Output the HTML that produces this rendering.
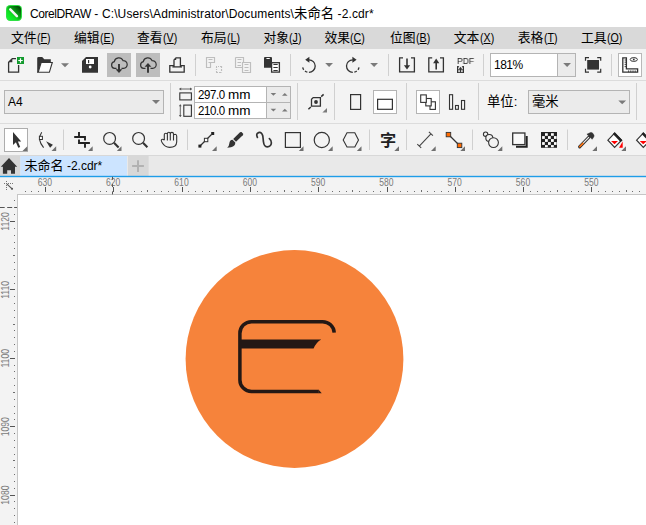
<!DOCTYPE html>
<html><head><meta charset="utf-8">
<style>
html,body{margin:0;padding:0;}
body{width:646px;height:525px;overflow:hidden;background:#fff;position:relative;font-family:"Liberation Sans","Noto Sans CJK SC",sans-serif;color:#000;}
.abs{position:absolute;}
.t{position:absolute;white-space:nowrap;line-height:1;z-index:2;}
#title{left:0;top:0;width:646px;height:27px;background:#fff;}
#menu{left:0;top:27px;width:646px;height:22px;background:#d9d9d9;}
#tb1{left:0;top:49px;width:646px;height:31px;background:#f3f3f3;}
#pb{left:0;top:80px;width:646px;height:44px;background:#f3f3f3;border-top:1px solid #dcdcdc;box-sizing:border-box;}
#tbx{left:0;top:123px;width:646px;height:33px;background:#f3f3f3;border-top:1px solid #dcdcdc;border-bottom:1px solid #d8d8d8;box-sizing:border-box;}
#tabs{left:0;top:156px;width:646px;height:20px;background:#e9e9e9;}
#blue{left:0;top:176px;width:646px;height:1px;background:#2aa0e6;}
#hr{left:0;top:177px;width:646px;height:18px;background:#f3f3f3;}
#vr{left:0;top:194px;width:18px;height:331px;background:#f3f3f3;}
#canvas{left:17px;top:194px;width:640px;height:340px;background:#fff;border:1px solid #c6c6c6;box-sizing:border-box;}
.m{top:31.3px;font-size:12.8px;}
.m i{font-style:normal;font-size:13.3px;display:inline-block;transform:scaleX(0.8);margin-left:0.4px;transform-origin:0 50%;position:relative;top:0px;}
.c{font-size:13.33px;}
.l{font-size:12px;}
.n{font-size:12.5px;letter-spacing:-0.45px;transform:scaleX(0.92);transform-origin:0 50%;}
.u2{font-size:12.5px;transform:scaleX(1.08);transform-origin:0 50%;}
.m u{text-decoration:underline;text-underline-offset:1px;}
svg{position:absolute;left:0;top:0;}
</style></head><body>
<div id="title" class="abs"></div>
<div id="menu" class="abs"></div>
<div id="tb1" class="abs"></div>
<div id="pb" class="abs"></div>
<div id="tbx" class="abs"></div>
<div id="tabs" class="abs"></div>
<div id="blue" class="abs"></div>
<div id="hr" class="abs"></div>
<div id="vr" class="abs"></div>
<div id="canvas" class="abs"></div>

<span class="t" id="ttl" style="left:30px;top:7px;font-size:12px;letter-spacing:0.125px"><span style="letter-spacing:-0.45px">CorelDRAW</span> - C:\Users\Administrator\Documents\<span class="c" style="letter-spacing:0">未命名</span> -2.cdr*</span>
<span class="t l" id="a4" style="left:8px;top:96px;">A4</span>
<span class="t l n" id="w1" style="left:198px;top:89px;">297.0</span><span class="t l u2" id="w1u" style="left:227.6px;top:89px;">mm</span>
<span class="t l n" id="w2" style="left:198px;top:105px;">210.0</span><span class="t l u2" id="w2u" style="left:227.6px;top:105px;">mm</span>
<span class="t l" id="zm" style="left:494px;top:59px;letter-spacing:-0.5px">181%</span>
<span class="t" id="pdf" style="transform:scaleX(0.95) translateZ(0);transform-origin:0 50%;will-change:transform;left:456.7px;top:57px;font-size:9px;letter-spacing:0;color:#222">PDF</span>
<span class="t c" id="unit" style="left:487px;top:94.5px;">单位:</span>
<span class="t c" id="mm" style="left:532px;top:94.5px;">毫米</span>
<span class="t" id="zi" style="left:380px;top:132.4px;font-size:16.2px;font-weight:bold;color:#222;">字</span>
<span class="t" id="tab" style="left:24.6px;top:159px;font-size:12px;"><span class="c" style="font-size:13px">未命名</span> -2.cdr*</span>

<span class="t m" style="left:11px">文件<i>(<u>F</u>)</i></span>
<span class="t m" style="left:74px">编辑<i>(<u>E</u>)</i></span>
<span class="t m" style="left:137px">查看<i>(<u>V</u>)</i></span>
<span class="t m" style="left:201px">布局<i>(<u>L</u>)</i></span>
<span class="t m" style="left:263.5px">对象<i>(<u>J</u>)</i></span>
<span class="t m" style="left:324.5px">效果<i>(<u>C</u>)</i></span>
<span class="t m" style="left:390px">位图<i>(<u>B</u>)</i></span>
<span class="t m" style="left:453.7px">文本<i>(<u>X</u>)</i></span>
<span class="t m" style="left:517.7px">表格<i>(<u>T</u>)</i></span>
<span class="t m" style="left:581px">工具<i>(<u>O</u>)</i></span>

<svg id="ui" width="646" height="525" viewBox="0 0 646 525">
<!-- app icon -->
<defs>
<linearGradient id="gapp" x1="0" y1="1" x2="1" y2="0"><stop offset="0" stop-color="#14fb30"/><stop offset="0.35" stop-color="#0fe022"/><stop offset="0.62" stop-color="#089012"/><stop offset="0.9" stop-color="#024a05"/></linearGradient>
</defs>
<rect x="6" y="5" width="16" height="16" rx="4.2" fill="#2fe044"/>
<rect x="7" y="6" width="14" height="14" rx="3.4" fill="url(#gapp)"/>
<path d="M10.3 9.3 L16.9 16.1" stroke="#f4f4f4" stroke-width="2.5" stroke-linecap="round"/>
<!-- toolbar1 -->
<g fill="none" stroke="#333" stroke-width="1.3">
<!-- new -->
<path d="M16 58.6 H12.3 L8.6 62.3 V72.2 H18.6 V65"/>
</g>
<path d="M8.6 62.3 H12.3 V58.6 Z" fill="#333"/>
<rect x="17" y="57" width="7" height="7" fill="#139a2e"/>
<path d="M20.5 58.3 V62.7 M18.3 60.5 H22.7" stroke="#fff" stroke-width="1.2"/>
<!-- open -->
<path d="M37.2 58.3 Q37.2 57 38.6 57 H42.2 L44.3 59.3 H50.8 V62.4 H41.2 L38 72.8 H37.2 Z" fill="#333"/>
<path d="M41.15 62.5 H52.3 L49.35 72.3 H38.15 Z" fill="#fbfbfb" stroke="#333" stroke-width="1.1"/>
<path d="M61 63.2 H69 L65 67.2 Z" fill="#7a7a7a"/>
<!-- save -->
<path d="M86 57 H98 V72.7 H82 V61 Z" fill="#333"/>
<rect x="86" y="59" width="8" height="5" fill="#fff"/>
<rect x="88" y="60" width="1.2" height="3.2" fill="#333"/>
<circle cx="90.2" cy="67" r="1.4" fill="#fff"/>
<!-- cloud buttons -->
<rect x="107" y="53" width="24" height="24" fill="#bdbdbd"/>
<rect x="136" y="53" width="24" height="24" fill="#bdbdbd"/>
<g fill="none" stroke="#333" stroke-width="1.2">
<path d="M116.5 68.4 H114.6 A3.4 3.4 0 0 1 114.3 61.7 A4.6 4.6 0 0 1 123 60.6 A3.9 3.9 0 0 1 123.6 68.4 H121.5"/>
<path d="M119 64 V70" stroke-width="1.9"/>
<path d="M145.5 68.4 H143.6 A3.4 3.4 0 0 1 143.3 61.7 A4.6 4.6 0 0 1 152 60.6 A3.9 3.9 0 0 1 152.6 68.4 H150.5"/>
<path d="M148 65.5 V72.7" stroke-width="1.9"/>
</g>
<path d="M115.6 69.3 H122.4 L119 73 Z" fill="#333"/>
<path d="M144.6 66.8 H151.4 L148 63 Z" fill="#333"/>
<!-- print -->
<g fill="none" stroke="#333" stroke-width="1.3">
<path d="M174 65.7 H169.8 V72.1 H184.2 V65.7 H180.4"/>
<path d="M174 66.9 V59.9 L176 57.8 H180.4 V66.9"/>
<path d="M172.4 66.9 H182"/>
</g>
<path d="M174 60 H176.2 V57.8 Z" fill="#333"/>
<!-- separators -->
<g stroke="#d0d0d0" stroke-width="1">
<path d="M195.5 54 V76 M290.5 54 V76 M388.5 54 V76 M483.5 54 V76 M611.5 54 V76"/>
</g>
<!-- cut (disabled) -->
<g fill="none" stroke="#bebebe" stroke-width="1.15">
<path d="M206.5 57.5 H214.5 V62.5 H210.5 V67.5 H206.5 Z"/>
<path d="M208.5 59.5 H212.5 M208.5 62.5 H210"/>
<path d="M216 66.5 H222" stroke-dasharray="1 1"/>
<path d="M216.5 67 V72" stroke-dasharray="1 1"/>
<path d="M216 72.5 H222 M221.5 66 V72.5" stroke-dasharray="2 1"/>
<!-- copy (disabled) -->
<path d="M235.5 57.5 H243.5 V62 M242 67.5 H235.5 V57.5"/>
<path d="M237.5 59.5 H241.5 M237.5 62.5 H241 M237.5 65.5 H241"/>
<path d="M242.5 62.5 H250.5 V72.5 H242.5 Z"/>
<path d="M244.5 64.5 H248.5 M244.5 67.5 H248.5 M244.5 70.5 H248.5"/>
</g>
<!-- paste -->
<path d="M264 58 Q264 57 265 57 H271 Q272 57 272 58 V62 H271 V67.8 H264 Z" fill="#333"/>
<rect x="266.3" y="57.9" width="3.6" height="1.2" rx="0.6" fill="#fff"/>
<rect x="271.6" y="62.7" width="7.8" height="9.4" fill="#fff" stroke="#333" stroke-width="1.3"/>
<path d="M273.4 64.5 H277.7 M273.4 67.5 H277.7 M273.4 70.5 H277.7" stroke="#333" stroke-width="1.1"/>
<!-- undo -->
<g fill="none" stroke="#333" stroke-width="1.3">
<path d="M308.9 59.8 A6.3 6.3 0 0 1 308.9 72.4"/>
<path d="M308.9 72.4 A6.3 6.3 0 0 1 302.6 66.1" stroke-dasharray="0 1.6 2.6 1.6 2.6 3"/>
<path d="M352.8 59.8 A6.3 6.3 0 0 0 352.8 72.4"/>
<path d="M352.8 72.4 A6.3 6.3 0 0 0 359.1 66.1" stroke-dasharray="0 1.6 2.6 1.6 2.6 3"/>
</g>
<path d="M305.2 59.8 L309.4 56.8 V62.8 Z" fill="#333"/>
<path d="M356.6 59.8 L352.4 56.8 V62.8 Z" fill="#333"/>
<path d="M325.2 63 H333 L329.1 67 Z" fill="#7a7a7a"/>
<path d="M370.2 63 H378 L374.1 67 Z" fill="#7a7a7a"/>
<!-- import / export -->
<g fill="none" stroke="#333" stroke-width="1.3">
<path d="M403 57.8 H399.6 V71.8 H414.4 V57.8 H411"/>
<path d="M432.2 57.8 H428.8 V71.8 H443.4 V57.8 H440"/>
</g>
<path d="M407 58.6 V67" stroke="#333" stroke-width="1.6"/>
<path d="M403.9 65.2 H410.1 L407 69.6 Z" fill="#333"/>
<path d="M436.2 69.6 V61.5" stroke="#333" stroke-width="1.6"/>
<path d="M433.1 63.2 H439.3 L436.2 58.6 Z" fill="#333"/>
<!-- pdf small icon -->
<g fill="#333">
<rect x="457" y="66.2" width="1.2" height="6.7"/><rect x="462.8" y="66.2" width="1.2" height="6.7"/>
<rect x="457" y="71.8" width="7" height="1.1"/>
<rect x="457" y="66.2" width="2.1" height="1.1"/><rect x="461.9" y="66.2" width="2.1" height="1.1"/>
<rect x="457" y="69.4" width="7" height="0.9"/>
<rect x="460" y="69" width="1" height="3.5"/>
<path d="M458.6 69.6 H462.4 L460.5 66.7 Z"/>
</g>
<!-- zoom combobox -->
<rect x="490.5" y="53.5" width="85" height="23" fill="#fff" stroke="#b4b4b4"/>
<rect x="558" y="54" width="17" height="22" fill="#ebebeb"/>
<path d="M557.5 54 V76" stroke="#b4b4b4"/>
<path d="M563.2 63 H571 L567.1 67 Z" fill="#7a7a7a"/>
<!-- fullscreen -->
<rect x="587.2" y="60" width="11.8" height="9.6" fill="#333"/>
<g fill="none" stroke="#333" stroke-width="1.2">
<path d="M585.5 60.8 V57.6 H589 M597.2 57.6 H600.7 V60.8 M600.7 68.8 V72.1 H597.2 M589 72.1 H585.5 V68.8"/>
</g>
<!-- rulers button -->
<rect x="618.5" y="53.5" width="23" height="23" fill="#fff" stroke="#b8b8b8"/>
<path d="M622.8 57.8 H626.4 V68.8 H637.6 V72.2 H622.8 Z" fill="none" stroke="#333" stroke-width="1.3"/>
<path d="M624.6 60 H626.4 M624.6 62.2 H626.4 M624.6 64.4 H626.4 M624.6 66.6 H626.4 M628.6 70.4 V72.2 M630.8 70.4 V72.2 M633 70.4 V72.2 M635.2 70.4 V72.2" stroke="#333" stroke-width="0.9"/>
<ellipse cx="633.8" cy="59.5" rx="3.6" ry="1.9" fill="none" stroke="#333" stroke-width="1"/>
<circle cx="633.8" cy="59.5" r="0.9" fill="#333"/>
<!-- property bar -->
<rect x="4.5" y="90.5" width="159" height="23" fill="#ebebeb" stroke="#b4b4b4"/>
<path d="M152 100 H160 L156 104 Z" fill="#7a7a7a"/>
<g stroke="#d0d0d0" stroke-width="1">
<path d="M170.5 83 V120 M297.5 83 V120 M334.5 83 V120 M406.5 83 V120 M478.5 83 V120 M636.5 83 V120"/>
</g>
<!-- width/height icons -->
<g fill="none" stroke="#333" stroke-width="1.1">
<rect x="179.8" y="92.9" width="11.6" height="7"/>
<rect x="183.8" y="105.1" width="7.6" height="11.2"/>
</g>
<path d="M179.5 89 H191.7 M180.3 104.8 V116.6" stroke="#555" stroke-width="0.9"/>
<path d="M179.2 89 L181.2 87.6 V90.4 Z M192 89 L190 87.6 V90.4 Z M180.3 104.3 L178.9 106.3 H181.7 Z M180.3 117 L178.9 115 H181.7 Z" fill="#555"/>
<!-- spin inputs -->
<rect x="194.5" y="86.5" width="96" height="32" fill="#fff" stroke="#b4b4b4"/>
<rect x="267" y="87" width="23" height="31" fill="#ebebeb"/>
<path d="M194.5 102.5 H290.5 M266.5 87 V118" stroke="#b4b4b4"/>
<path d="M270.6 93 H276.2 L273.4 95.8 Z M282 95.8 H287.6 L284.8 93 Z M270.6 108.8 H276.2 L273.4 111.6 Z M282 111.6 H287.6 L284.8 108.8 Z" fill="#7a7a7a"/>
<!-- page dimension icon -->
<path d="M313.2 97.6 H320.4 V106.2 H311.5 V99.3 Z" fill="none" stroke="#333" stroke-width="1.3"/>
<circle cx="316" cy="102" r="1.9" fill="#333"/>
<path d="M321.2 96.6 L323.6 94.4 M308.4 109.2 L310.8 107" stroke="#333" stroke-width="1.5"/>
<path d="M322.4 112.6 H327 V108 Z" fill="#7a7a7a"/>
<!-- portrait / landscape -->
<rect x="350.6" y="94.6" width="10" height="14.8" fill="none" stroke="#333" stroke-width="1.2"/>
<rect x="373.5" y="90.5" width="23" height="23" fill="#fff" stroke="#b4b4b4"/>
<rect x="377.6" y="99.3" width="14.8" height="10" fill="none" stroke="#333" stroke-width="1.2"/>
<!-- all pages / current page -->
<rect x="416.5" y="90.5" width="23" height="23" fill="#fff" stroke="#b4b4b4"/>
<g fill="#fff" stroke="#333" stroke-width="1.1">
<rect x="430" y="101.8" width="5.4" height="7.6"/>
<rect x="425.8" y="98.5" width="5.4" height="7.4"/>
<rect x="420.7" y="94.9" width="5.6" height="7.5"/>
</g>
<g fill="none" stroke="#333" stroke-width="1.1">
<rect x="449.5" y="94.7" width="3.1" height="14.6"/>
<rect x="455.5" y="105.5" width="2.9" height="3.8"/>
<rect x="461.5" y="100.5" width="3.1" height="8.8"/>
</g>
<!-- units combobox -->
<rect x="528.5" y="90.5" width="101" height="23" fill="#ebebeb" stroke="#b4b4b4"/>
<path d="M618.3 100.4 H626.1 L622.2 104.3 Z" fill="#7a7a7a"/>
<!-- toolbox -->
<g stroke="#d0d0d0" stroke-width="1">
<path d="M63.5 129.5 V150 M187.5 129.5 V150 M369.5 129.5 V150 M406.5 129.5 V150 M472.5 129.5 V150 M567.5 129.5 V150"/>
</g>
<!-- pick -->
<rect x="4.5" y="128.5" width="23" height="23" fill="#fff" stroke="#adadad"/>
<path d="M13 132 V145 L15.9 142.2 L18.3 147.8 L20.2 147 L17.9 141.6 H21.2 Z" fill="#333"/>
<g fill="#707070">
<path d="M22.5 151 H27.3 V146.2 Z"/>
<path d="M51.5 151 H56.2 V146.3 Z"/>
<path d="M88 151 H92.7 V146.3 Z"/>
<path d="M116.8 151 H121.5 V146.3 Z"/>
<path d="M212 151 H216.7 V146.3 Z"/>
<path d="M298.8 151 H303.5 V146.3 Z"/>
<path d="M328 151 H332.7 V146.3 Z"/>
<path d="M356.8 151 H361.5 V146.3 Z"/>
<path d="M394.3 151 H399 V146.3 Z"/>
<path d="M431 151 H435.7 V146.3 Z"/>
<path d="M460.3 151 H465 V146.3 Z"/>
<path d="M497.6 151 H502.3 V146.3 Z"/>
<path d="M592.3 151 H597 V146.3 Z"/>
<path d="M621.3 151 H626 V146.3 Z"/>
</g>
<!-- shape tool -->
<path d="M41.7 132.2 Q36.8 139.5 43.6 147.6" fill="none" stroke="#333" stroke-width="1.1"/>
<rect x="39.4" y="136.3" width="3" height="3.2" fill="#fff" stroke="#333" stroke-width="1"/>
<path d="M46.1 141.2 L52.9 144.8 L50.1 147.7 Z" fill="#333"/>
<!-- crop -->
<path d="M79 132 V137 M74.2 137 H85 V140.5 M79 139.4 V143 H89.9 M85 143 V147.7" fill="none" stroke="#222" stroke-width="1.9"/>
<!-- zoom x2 -->
<g fill="none" stroke="#333">
<circle cx="109.6" cy="138.4" r="5.9" stroke-width="1.2"/>
<path d="M114 142.8 L118.6 147.4" stroke-width="2.1"/>
<circle cx="138.6" cy="138.4" r="5.9" stroke-width="1.2"/>
<path d="M143 142.8 L147.4 147.2" stroke-width="2.1"/>
</g>
<!-- hand -->
<path d="M164.3 140.2 V134.4 Q164.3 133.2 165.8 133.2 Q167.4 133.2 167.4 134.4 V140.6 M167.4 134 Q167.4 132.3 168.8 132.3 Q170.3 132.3 170.3 134 V140.6 M170.3 134 Q170.3 132.4 171.9 132.4 Q173.5 132.4 173.5 134 V140.6 M173.5 135.4 Q173.6 134.2 175.1 134.2 Q176.7 134.3 176.7 136 V142 Q176.5 147.4 169.6 147.4 Q164.8 147.2 162.2 142.8 Q160.6 140 161.8 139.4 Q163 138.9 164.3 140.2" fill="none" stroke="#333" stroke-width="1.1" stroke-linejoin="round"/>
<!-- freehand -->
<path d="M200.5 145.5 L211.5 134.5" stroke="#333" stroke-width="1.2"/>
<rect x="198.4" y="144.6" width="3" height="3" fill="#222"/>
<rect x="211.2" y="132" width="3" height="3" fill="#222"/>
<rect x="204.4" y="138.3" width="3.4" height="3.4" fill="#fff" stroke="#333" stroke-width="1"/>
<!-- brush -->
<path d="M241.5 132 L243.2 133.7 Q243.4 134.5 242.8 135.2 L236 141.8 L233.2 139 L240 132.3 Q240.8 131.7 241.5 132 Z" fill="#333"/>
<path d="M232.5 139.8 L235.3 142.6 Q235.5 146.5 231 147.2 Q229 147.6 227.2 147.8 Q229.2 146 229.3 143.5 Q229.6 140 232.5 139.8 Z" fill="#333"/>
<!-- artistic media -->
<path d="M257.4 137.4 Q255.6 133.6 258.6 132.6 Q262 131.8 262.8 136 Q263.2 139 263.4 141.5 Q264 146.8 267.2 146.9 Q271 146.6 271.4 143 Q271.6 140.4 269.4 138.6" fill="none" stroke="#333" stroke-width="1.7" stroke-linecap="round"/>
<!-- rectangle -->
<rect x="285.4" y="132.6" width="15" height="14.8" fill="none" stroke="#333" stroke-width="1.2"/>
<!-- ellipse -->
<circle cx="321.8" cy="140" r="7.6" fill="none" stroke="#333" stroke-width="1.2"/>
<!-- polygon -->
<path d="M343.2 139.9 L347 132.7 H354.8 L358.5 139.9 L354.8 147 H347 Z" fill="none" stroke="#333" stroke-width="1.1"/>
<!-- dimension -->
<path d="M419.3 146.1 L430.9 133.8 M417.3 144.2 L421.2 147.9 M428.9 131.9 L432.9 135.7" stroke="#444" stroke-width="1.1" fill="none"/>
<!-- connector -->
<path d="M448.5 134.5 L459.5 145.5" stroke="#333" stroke-width="1.3"/>
<rect x="446.2" y="132.4" width="4.5" height="4.4" fill="#ff6a00" stroke="#333" stroke-width="0.9"/>
<rect x="457.3" y="143.2" width="4.5" height="4.4" fill="#ff6a00" stroke="#333" stroke-width="0.9"/>
<!-- blend -->
<g fill="#f3f3f3" stroke="#333" stroke-width="1.1">
<circle cx="485.6" cy="134.2" r="2.2"/>
<circle cx="489.3" cy="138" r="3.5"/>
<circle cx="493.5" cy="142.6" r="4.9"/>
</g>
<!-- shadow -->
<path d="M526.7 136 V146.7 H516" fill="none" stroke="#222" stroke-width="2"/>
<rect x="512.7" y="133" width="12.2" height="11.6" fill="#fafafa" stroke="#333" stroke-width="1.3"/>
<!-- transparency -->
<rect x="541" y="132" width="16" height="15.8" fill="#222"/>
<g fill="#fff">
<rect x="545" y="133.2" width="2.8" height="2.6"/><rect x="551" y="133.2" width="2.8" height="2.6"/>
<rect x="542.1" y="136.1" width="2.7" height="2.8"/><rect x="548" y="136.1" width="2.8" height="2.8"/><rect x="554" y="136.1" width="2.6" height="2.8"/>
<rect x="545" y="139.1" width="2.8" height="2.8"/><rect x="551" y="139.1" width="2.8" height="2.8"/>
<rect x="542.1" y="142.1" width="2.7" height="2.8"/><rect x="548" y="142.1" width="2.8" height="2.8"/><rect x="554" y="142.1" width="2.6" height="2.8"/>
<rect x="545" y="145.1" width="2.8" height="2.2"/><rect x="551" y="145.1" width="2.8" height="2.2"/>
</g>
<!-- eyedropper -->
<path d="M579.6 146.8 L589 137.1" stroke="#333" stroke-width="3.1" stroke-linecap="round"/>
<path d="M580.2 146.2 L589 137.1" stroke="#f6f6f6" stroke-width="1.1"/>
<path d="M579.8 146.6 L583 143.3" stroke="#ff6a00" stroke-width="1.5" stroke-linecap="round"/>
<path transform="translate(-0.1 0.5)" d="M587 133.7 L590.6 132.1 Q592 131.7 592.9 132.8 L594 134.5 Q594.5 135.6 593.8 136.4 L592.3 138.8 Z" fill="#333" stroke="#333" stroke-width="0.5" stroke-linejoin="round"/>
<!-- fill buckets -->
<g>
<path d="M614.6 133 L621.6 140.2 L614.6 147.3 L607.9 140.2 Z" fill="#fff" stroke="#333" stroke-width="1.2"/>
<path d="M614.6 132.2 L622.4 140.2 L620.6 142 L612.9 134 Z" fill="#222"/>
<path d="M611 141 H618 L614.5 144.3 Z" fill="#f00"/>
<path d="M622.7 141.4 V147.8 H619 Z" fill="#f00"/>
</g>
<g transform="translate(28.7 0)">
<path d="M614.6 133 L621.6 140.2 L614.6 147.3 L607.9 140.2 Z" fill="#fff" stroke="#333" stroke-width="1.2"/>
<path d="M614.6 132.2 L622.4 140.2 L620.6 142 L612.9 134 Z" fill="#222"/>
<path d="M611 141 H618 L614.5 144.3 Z" fill="#f00"/>
</g>
<!-- tabs -->
<rect x="0" y="156" width="20.4" height="20" fill="#d6d6d6"/>
<rect x="20.4" y="156" width="106.6" height="20" fill="#cce4ff"/>
<rect x="128" y="156" width="20.6" height="20" fill="#d8d8d8"/>
<path d="M138 160.2 V172 M132.1 166.1 H143.9" stroke="#b2b2b2" stroke-width="2"/>
<path d="M9 158 L17.2 166.8 H15 V173.7 H11 V170.2 H7.2 V173.7 H2.9 V166.8 H0.8 Z" fill="#333"/>
<rect x="0" y="175.8" width="646" height="1.4" fill="#1e9de8"/>

<g fill="#6e6e6e">
<rect x="25" y="191" width="1" height="1"/>
<rect x="31" y="191" width="1" height="1"/>
<rect x="38" y="191" width="1" height="1"/>
<rect x="45" y="187" width="1" height="5" fill="#555"/>
<rect x="52" y="191" width="1" height="1"/>
<rect x="59" y="191" width="1" height="1"/>
<rect x="65" y="191" width="1" height="1"/>
<rect x="72" y="191" width="1" height="1"/>
<rect x="79" y="190" width="1" height="2"/>
<rect x="86" y="191" width="1" height="1"/>
<rect x="93" y="191" width="1" height="1"/>
<rect x="100" y="191" width="1" height="1"/>
<rect x="106" y="191" width="1" height="1"/>
<rect x="113" y="187" width="1" height="5" fill="#555"/>
<rect x="120" y="191" width="1" height="1"/>
<rect x="127" y="191" width="1" height="1"/>
<rect x="134" y="191" width="1" height="1"/>
<rect x="141" y="191" width="1" height="1"/>
<rect x="147" y="190" width="1" height="2"/>
<rect x="154" y="191" width="1" height="1"/>
<rect x="161" y="191" width="1" height="1"/>
<rect x="168" y="191" width="1" height="1"/>
<rect x="175" y="191" width="1" height="1"/>
<rect x="182" y="187" width="1" height="5" fill="#555"/>
<rect x="188" y="191" width="1" height="1"/>
<rect x="195" y="191" width="1" height="1"/>
<rect x="202" y="191" width="1" height="1"/>
<rect x="209" y="191" width="1" height="1"/>
<rect x="216" y="190" width="1" height="2"/>
<rect x="223" y="191" width="1" height="1"/>
<rect x="229" y="191" width="1" height="1"/>
<rect x="236" y="191" width="1" height="1"/>
<rect x="243" y="191" width="1" height="1"/>
<rect x="250" y="187" width="1" height="5" fill="#555"/>
<rect x="257" y="191" width="1" height="1"/>
<rect x="264" y="191" width="1" height="1"/>
<rect x="270" y="191" width="1" height="1"/>
<rect x="277" y="191" width="1" height="1"/>
<rect x="284" y="190" width="1" height="2"/>
<rect x="291" y="191" width="1" height="1"/>
<rect x="298" y="191" width="1" height="1"/>
<rect x="305" y="191" width="1" height="1"/>
<rect x="311" y="191" width="1" height="1"/>
<rect x="318" y="187" width="1" height="5" fill="#555"/>
<rect x="325" y="191" width="1" height="1"/>
<rect x="332" y="191" width="1" height="1"/>
<rect x="339" y="191" width="1" height="1"/>
<rect x="346" y="191" width="1" height="1"/>
<rect x="352" y="190" width="1" height="2"/>
<rect x="359" y="191" width="1" height="1"/>
<rect x="366" y="191" width="1" height="1"/>
<rect x="373" y="191" width="1" height="1"/>
<rect x="380" y="191" width="1" height="1"/>
<rect x="387" y="187" width="1" height="5" fill="#555"/>
<rect x="393" y="191" width="1" height="1"/>
<rect x="400" y="191" width="1" height="1"/>
<rect x="407" y="191" width="1" height="1"/>
<rect x="414" y="191" width="1" height="1"/>
<rect x="421" y="190" width="1" height="2"/>
<rect x="427" y="191" width="1" height="1"/>
<rect x="434" y="191" width="1" height="1"/>
<rect x="441" y="191" width="1" height="1"/>
<rect x="448" y="191" width="1" height="1"/>
<rect x="455" y="187" width="1" height="5" fill="#555"/>
<rect x="462" y="191" width="1" height="1"/>
<rect x="468" y="191" width="1" height="1"/>
<rect x="475" y="191" width="1" height="1"/>
<rect x="482" y="191" width="1" height="1"/>
<rect x="489" y="190" width="1" height="2"/>
<rect x="496" y="191" width="1" height="1"/>
<rect x="503" y="191" width="1" height="1"/>
<rect x="509" y="191" width="1" height="1"/>
<rect x="516" y="191" width="1" height="1"/>
<rect x="523" y="187" width="1" height="5" fill="#555"/>
<rect x="530" y="191" width="1" height="1"/>
<rect x="537" y="191" width="1" height="1"/>
<rect x="544" y="191" width="1" height="1"/>
<rect x="550" y="191" width="1" height="1"/>
<rect x="557" y="190" width="1" height="2"/>
<rect x="564" y="191" width="1" height="1"/>
<rect x="571" y="191" width="1" height="1"/>
<rect x="578" y="191" width="1" height="1"/>
<rect x="585" y="191" width="1" height="1"/>
<rect x="591" y="187" width="1" height="5" fill="#555"/>
<rect x="598" y="191" width="1" height="1"/>
<rect x="605" y="191" width="1" height="1"/>
<rect x="612" y="191" width="1" height="1"/>
<rect x="619" y="191" width="1" height="1"/>
<rect x="626" y="190" width="1" height="2"/>
<rect x="632" y="191" width="1" height="1"/>
<rect x="639" y="191" width="1" height="1"/>
<rect x="14" y="200" width="1" height="1"/>
<rect x="14" y="207" width="1" height="1"/>
<rect x="14" y="214" width="1" height="1"/>
<rect x="10" y="221" width="5" height="1" fill="#555"/>
<rect x="14" y="228" width="1" height="1"/>
<rect x="14" y="235" width="1" height="1"/>
<rect x="14" y="242" width="1" height="1"/>
<rect x="14" y="248" width="1" height="1"/>
<rect x="13" y="255" width="2" height="1"/>
<rect x="14" y="262" width="1" height="1"/>
<rect x="14" y="269" width="1" height="1"/>
<rect x="14" y="276" width="1" height="1"/>
<rect x="14" y="283" width="1" height="1"/>
<rect x="10" y="289" width="5" height="1" fill="#555"/>
<rect x="14" y="296" width="1" height="1"/>
<rect x="14" y="303" width="1" height="1"/>
<rect x="14" y="310" width="1" height="1"/>
<rect x="14" y="317" width="1" height="1"/>
<rect x="13" y="324" width="2" height="1"/>
<rect x="14" y="330" width="1" height="1"/>
<rect x="14" y="337" width="1" height="1"/>
<rect x="14" y="344" width="1" height="1"/>
<rect x="14" y="351" width="1" height="1"/>
<rect x="10" y="358" width="5" height="1" fill="#555"/>
<rect x="14" y="365" width="1" height="1"/>
<rect x="14" y="371" width="1" height="1"/>
<rect x="14" y="378" width="1" height="1"/>
<rect x="14" y="385" width="1" height="1"/>
<rect x="13" y="392" width="2" height="1"/>
<rect x="14" y="399" width="1" height="1"/>
<rect x="14" y="406" width="1" height="1"/>
<rect x="14" y="413" width="1" height="1"/>
<rect x="14" y="419" width="1" height="1"/>
<rect x="10" y="426" width="5" height="1" fill="#555"/>
<rect x="14" y="433" width="1" height="1"/>
<rect x="14" y="440" width="1" height="1"/>
<rect x="14" y="447" width="1" height="1"/>
<rect x="14" y="454" width="1" height="1"/>
<rect x="13" y="460" width="2" height="1"/>
<rect x="14" y="467" width="1" height="1"/>
<rect x="14" y="474" width="1" height="1"/>
<rect x="14" y="481" width="1" height="1"/>
<rect x="14" y="488" width="1" height="1"/>
<rect x="10" y="495" width="5" height="1" fill="#555"/>
<rect x="14" y="501" width="1" height="1"/>
<rect x="14" y="508" width="1" height="1"/>
<rect x="14" y="515" width="1" height="1"/>
<rect x="14" y="522" width="1" height="1"/>
</g>
<g font-family="Liberation Sans, sans-serif" font-size="10" fill="#7a7a7a" text-anchor="middle">
<text transform="translate(44.9 186) scale(0.86 1)">630</text>
<text transform="translate(113.2 186) scale(0.86 1)">620</text>
<text transform="translate(181.5 186) scale(0.86 1)">610</text>
<text transform="translate(249.8 186) scale(0.86 1)">600</text>
<text transform="translate(318.1 186) scale(0.86 1)">590</text>
<text transform="translate(386.4 186) scale(0.86 1)">580</text>
<text transform="translate(454.7 186) scale(0.86 1)">570</text>
<text transform="translate(523.0 186) scale(0.86 1)">560</text>
<text transform="translate(591.3 186) scale(0.86 1)">550</text>
<text transform="translate(9.1 221.5) rotate(-90) scale(0.86 1)">1120</text>
<text transform="translate(9.1 289.9) rotate(-90) scale(0.86 1)">1110</text>
<text transform="translate(9.1 358.3) rotate(-90) scale(0.86 1)">1100</text>
<text transform="translate(9.1 426.7) rotate(-90) scale(0.86 1)">1090</text>
<text transform="translate(9.1 495.1) rotate(-90) scale(0.86 1)">1080</text>
</g>
<path d="M112.5 176.8 V194.6" stroke="#555" stroke-width="1" stroke-dasharray="3 4.3"/>
<path d="M-0.3 207.5 H17" stroke="#555" stroke-width="1" stroke-dasharray="5 2.5"/>
<path d="M6.5 181 V191 M4 183.5 H14" stroke="#777" stroke-width="1" stroke-dasharray="1 1"/>
<path d="M6.8 183.8 L11.8 188.6" stroke="#555" stroke-width="1.1"/><circle cx="12" cy="188.8" r="1.1" fill="#555"/>
<circle cx="294.5" cy="359" r="108.9" fill="#f6833b"/>
<path d="M334.2 332.6 A11.6 11.6 0 0 0 322.6 321.7 H251.5 A11.6 11.6 0 0 0 239.9 333.3 V379.9 A11.6 11.6 0 0 0 251.5 391.5 H318.8" fill="none" stroke="#231815" stroke-width="3.5"/><path d="M318.7 389.75 V393.25 H321.7 Z" fill="#231815"/>
<path d="M240 339.5 H321.3 Q316.2 342.3 313.6 348.5 H240 Z" fill="#231815"/>
</svg>
</body></html>
